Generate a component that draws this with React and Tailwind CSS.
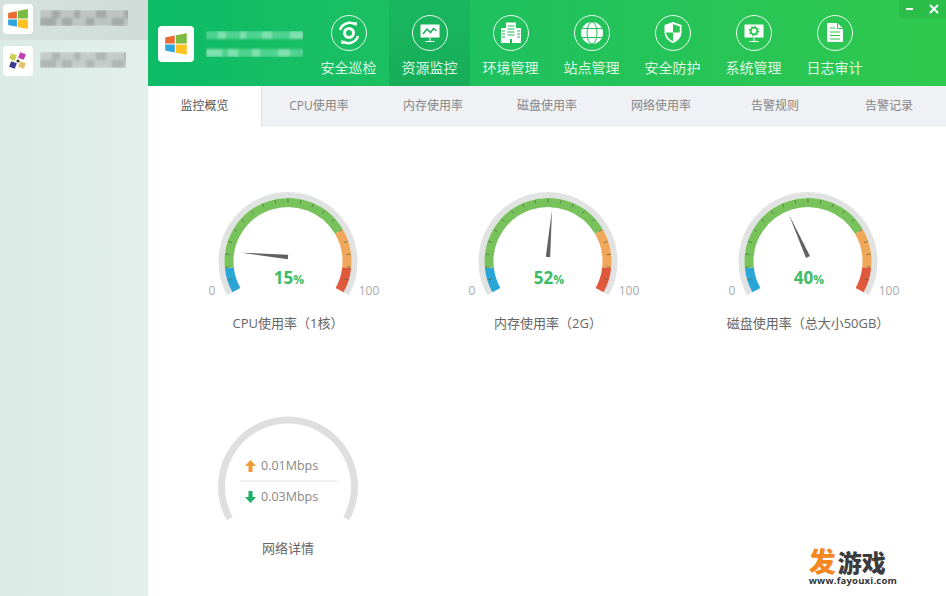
import React from 'react';

const CJK = 'font-["Open_Sans","Noto_Sans_CJK_SC",sans-serif]';

// needle pivot sits a bit above the centre of the arcs
const PIVOT_Y = 77;
const ARC_Y = 81.5;

const polar = (r, deg, cy = ARC_Y) => {
    const a = (deg * Math.PI) / 180;
    return [130 + r * Math.cos(a), cy + r * Math.sin(a)];
};

const arc = (r, from, to) => {
    const [x1, y1] = polar(r, from);
    const [x2, y2] = polar(r, to);
    const large = to - from > 180 ? 1 : 0;
    return `M${x1} ${y1}A${r} ${r} 0 ${large} 1 ${x2} ${y2}`;
};

const START = -209;
const END = 29;

const Needle = ({ value }) => {
    const deg = -211 + (242 * value) / 100;
    const [tx, ty] = polar(47, deg, PIVOT_Y);
    const [ax, ay] = polar(2.2, deg + 90, PIVOT_Y);
    const [bx, by] = polar(2.2, deg - 90, PIVOT_Y);
    return <polygon points={`${tx},${ty} ${ax},${ay} ${bx},${by}`} fill="#5f6163" />;
};

const Gauge = ({ value, label }) => {
    const ticks = Array.from({ length: 19 }, (_, i) => START + ((END - START) * (i + 1)) / 20);
    return (
        <div className="flex flex-col items-center">
            <svg width="260" height="130" viewBox="0 0 260 130">
                <path d={arc(66.5, START, END)} fill="none" stroke="#e1e3e2" strokeWidth="6" />
                <path d={arc(59, START, -186)} fill="none" stroke="#29a5d6" strokeWidth="9" />
                <path d={arc(59, -186, -30.5)} fill="none" stroke="#78c25c" strokeWidth="9" />
                <path d={arc(59, -30.5, 6)} fill="none" stroke="#f0a75a" strokeWidth="9" />
                <path d={arc(59, 6, END)} fill="none" stroke="#e0583c" strokeWidth="9" />
                {ticks.map((d) => {
                    const [x1, y1] = polar(59, d);
                    const [x2, y2] = polar(63, d);
                    return <line key={d} x1={x1} y1={y1} x2={x2} y2={y2} stroke="#4d6b3f" strokeOpacity="0.7" strokeWidth="1" />;
                })}
                <Needle value={value} />
                <text x="131" y="104" textAnchor="middle" fill="#3dbb66" fontWeight="700" fontSize="17">
                    {value}<tspan fontSize="12">%</tspan>
                </text>
                <text x="54" y="115" textAnchor="middle" fill="#aaaaaa" fontSize="12">0</text>
                <text x="211" y="115" textAnchor="middle" fill="#aaaaaa" fontSize="12">100</text>
            </svg>
            <div className="mt-[3px] h-5 text-[13px] leading-5 text-[#666666] whitespace-nowrap">{label}</div>
        </div>
    );
};

const NetworkGauge = () => (
    <div className="flex flex-col items-center">
        <svg width="260" height="130" viewBox="0 0 260 130">
            <path d={arc(66.5, START, END)} fill="none" stroke="#dedfde" strokeWidth="7" />
            <path d="M90.500 67v-6h-3.500l5.500-6 5.500 6h-3.500v6z" fill="#ee9a36" />
            <text x="103" y="65" fill="#888888" fontSize="12.500">0.01Mbps</text>
            <line x1="82" y1="76" x2="179" y2="76" stroke="#e3e4e4" />
            <path d="M90.500 86v6h-3.500l5.500 6 5.500-6h-3.500v-6z" fill="#1cb167" />
            <text x="103" y="96" fill="#888888" fontSize="12.500">0.03Mbps</text>
        </svg>
        <div className="mt-[3px] h-5 text-[13px] leading-5 text-[#666666]">网络详情</div>
    </div>
);

const WinLogo = ({ size }) => (
    <svg width={size} height={size} viewBox="0 0 20 20">
        <path d="M1 4.500 9 3v6.500H1z" fill="#ec6b35" />
        <path d="M10 2.800 19 1v8.500h-9z" fill="#7cbb42" />
        <path d="M1 10.500h8V17l-8-1.500z" fill="#2da6de" />
        <path d="M10 10.500h9V19l-9-1.800z" fill="#fdc221" />
    </svg>
);

const FlowerLogo = () => (
    <svg width="22" height="22" viewBox="0 0 22 22">
        <rect x="3" y="4" width="6" height="6" fill="#c9cf4f" transform="rotate(20 6 7)" />
        <rect x="12" y="3" width="6" height="6" fill="#c23bb0" transform="rotate(20 15 6)" />
        <rect x="3" y="12" width="6" height="6" fill="#3c3a8f" transform="rotate(20 6 15)" />
        <rect x="12" y="12" width="6" height="6" fill="#e3c36a" transform="rotate(20 15 15)" />
        <circle cx="11" cy="11" r="1.500" fill="#333333" />
    </svg>
);

const Ring = ({ children }) => (
    <svg width="36" height="36" viewBox="0 0 36 36" className="shrink-0">
        <circle cx="18" cy="18" r="17.500" fill="none" stroke="#ffffff" strokeOpacity="0.9" />
        {children}
    </svg>
);

const icons = [
    <Ring key="scan">
        <circle cx="18" cy="18" r="4.500" fill="none" stroke="#fff" strokeWidth="3" />
        <path d="M9 15a10 10 0 0 1 15-5.500" fill="none" stroke="#fff" strokeWidth="2.500" />
        <path d="M27 21a10 10 0 0 1-15 5.500" fill="none" stroke="#fff" strokeWidth="2.500" />
        <path d="M22 7.500l4-.5-.5 4.500z M14 28.500l-4 .5.500-4.500z" fill="#fff" />
    </Ring>,
    <Ring key="monitor">
        <rect x="8.500" y="9.500" width="19" height="13" fill="#fff" />
        <path d="M11 19l4-5 3.500 3.500 3-4 3 2.500" fill="none" stroke="#14ad5c" strokeWidth="1.500" />
        <path d="M18 22.500v3.500M13.500 26.500h9" stroke="#fff" strokeWidth="1" />
    </Ring>,
    <Ring key="building">
        <path d="M13 7.500h10v20.500H13z M8 13h5v15H8z M23 13h5v15h-5z" fill="#fff" />
        <path d="M14.500 11h7M14.500 14h7M14.500 17h7M14.500 20h7M9 16h3M9 19h3M9 22h3M24 16h3M24 19h3M24 22h3" stroke="#1fbb5e" strokeWidth="1" />
        <rect x="17" y="24" width="2" height="4" fill="#1fbb5e" />
    </Ring>,
    <Ring key="globe">
        <circle cx="18" cy="18" r="11" fill="#fff" />
        <ellipse cx="18" cy="18" rx="5" ry="11" fill="none" stroke="#22bf5c" />
        <path d="M8 13.500h20M8 22.500h20" stroke="#22bf5c" />
    </Ring>,
    <Ring key="shield">
        <path d="M18 7l8.500 3v7c0 5.500-3.500 9-8.500 11-5-2-8.500-5.500-8.500-11v-7z" fill="#fff" />
        <path d="M18 9l6.800 2.400v6.100H18z M18 17.500h-7c.500 4 3.200 7 7 8.800z" fill="#2ac650" />
    </Ring>,
    <Ring key="system">
        <rect x="8.500" y="9.500" width="19" height="13" fill="#fff" />
        <circle cx="18" cy="16" r="3.300" fill="none" stroke="#2bc851" strokeWidth="1.800" />
        <circle cx="18" cy="16" r="4.600" fill="none" stroke="#2bc851" strokeWidth="1.300" strokeDasharray="1.500 2.100" />
        <path d="M18 22.500v3.500M13.500 26.500h9" stroke="#fff" strokeWidth="1" />
    </Ring>,
    <Ring key="log">
        <path d="M10 8h10.500l5.500 5.500V27H10z" fill="#fff" />
        <path d="M20.500 8v5.500H26" fill="none" stroke="#2cc84f" />
        <path d="M13 13h5M13 17h10M13 20.500h10M13 24h10" stroke="#2cc84f" strokeWidth="1" />
    </Ring>,
];

const navItems = ['安全巡检', '资源监控', '环境管理', '站点管理', '安全防护', '系统管理', '日志审计'];
const tabs = ['监控概览', 'CPU使用率', '内存使用率', '磁盘使用率', '网络使用率', '告警规则', '告警记录'];

// mosaic placeholder for the masked names
const widths = [
    ['w-[12px]', 'w-[8px]', 'w-[14px]', 'w-[6px]', 'w-[16px]', 'w-[10px]', 'w-[18px]', 'w-[14px]'],
    ['w-[16px]', 'w-[6px]', 'w-[10px]', 'w-[14px]', 'w-[8px]', 'w-[18px]', 'w-[12px]', 'w-[14px]'],
];

const Masked = ({ dark, light, h, gap }) => (
    <div className={`flex flex-col blur-[1px] ${gap}`}>
        {widths.map((row, r) => (
            <div key={r} className="flex">
                {row.map((w, i) => (
                    <div key={i} className={`${w} ${h} shrink-0 ${(i + r) % 2 ? dark : light}`}></div>
                ))}
            </div>
        ))}
    </div>
);

export default function App() {
    return (
        <div className={`flex w-[946px] h-[596px] overflow-hidden bg-white ${CJK}`}>
            {/* Sidebar */}
            <div className="w-[148px] shrink-0 bg-linear-to-r from-[#dcebe6] to-[#e2efeb]">
                <div className="h-10 flex items-start pl-[3px] pt-1 gap-[6px] bg-linear-to-r from-[#d5e2dd] to-[#cfdcd7]">
                    <div className="w-[30px] h-[30px] bg-white rounded-sm flex items-center justify-center"><WinLogo size={22} /></div>
                    <div className="mt-[6px] ml-[1px] w-[88px] overflow-hidden"><Masked dark="bg-[#a3aaa7]" light="bg-[#bcc5c1]" h="h-[8px]" gap="gap-0" /></div>
                </div>
                <div className="h-[46px] flex items-start pl-[3px] pt-[6px] gap-[6px]">
                    <div className="w-[30px] h-[30px] bg-white rounded-sm flex items-center justify-center"><FlowerLogo /></div>
                    <div className="mt-[6px] ml-[1px] w-[86px] overflow-hidden"><Masked dark="bg-[#aeb6b3]" light="bg-[#c4ccc9]" h="h-[8px]" gap="gap-0" /></div>
                </div>
            </div>

            {/* Main */}
            <div className="flex-1 flex flex-col min-w-0">
                <div className="relative h-[86px] flex bg-linear-to-r from-[#0dbb68] to-[#2fc94e]">
                    <div className="w-[160px] flex items-center pl-[10px] pt-[2px] gap-3">
                        <div className="w-9 h-9 bg-white rounded-sm flex items-center justify-center"><WinLogo size={24} /></div>
                        <div className="w-[97px] overflow-hidden">
                            <Masked dark="bg-[#7fdfae]" light="bg-[#4fd290]" h="h-[8px]" gap="gap-[10px]" />
                        </div>
                    </div>
                    {navItems.map((name, i) => (
                        <div key={name} className={`w-[81px] flex flex-col items-center pt-[15px] ${i === 1 ? 'bg-linear-to-b from-[#19b75f] to-[#17ad58]' : ''}`}>
                            {icons[i]}
                            <span className="mt-[7px] text-sm leading-5 text-[#dcf7e4] whitespace-nowrap">{name}</span>
                        </div>
                    ))}
                    <div className="absolute top-0 right-0 w-[47px] h-[18px] flex items-center justify-between pl-[7px] pr-[7px] bg-black/5">
                        <span className="w-[7px] h-[2px] bg-white"></span>
                        <svg width="10" height="10" viewBox="0 0 10 10"><path d="M1 1l8 8M9 1l-8 8" stroke="#fff" strokeWidth="2" /></svg>
                    </div>
                </div>

                <div className="h-10 grid grid-cols-7 bg-[#f0f1f5] border-b border-[#e6e7ea]">
                    {tabs.map((t, i) => (
                        <div key={t} className={`flex items-center justify-center text-xs ${i === 0 ? 'bg-white text-[#555555] border-r border-[#dddee2] -mb-px' : 'text-[#858585]'}`}>{t}</div>
                    ))}
                </div>

                <div className="relative flex-1 pl-[10px] pt-[54px]">
                    <div className="grid grid-cols-[repeat(3,260px)] gap-y-[72px]">
                        <Gauge value={15} label="CPU使用率（1核）" />
                        <Gauge value={52} label="内存使用率（2G）" />
                        <Gauge value={40} label="磁盘使用率（总大小50GB）" />
                        <NetworkGauge />
                    </div>
                    {/* watermark */}
                    <div className="absolute right-[49px] bottom-[10px] flex flex-col items-start">
                        <div className="flex items-end h-[28px] mb-px">
                            <span className="text-[27px] leading-[27px] font-black text-[#f5871f]">发</span>
                            <span className="ml-[2px] text-[24px] leading-[24px] font-black text-[#3c3c3c]">游戏</span>
                        </div>
                        <span className="text-[9.500px] leading-[10px] font-bold text-[#333333] tracking-[0.2px]">www.fayouxi.com</span>
                    </div>
                </div>
            </div>
        </div>
    );
}
